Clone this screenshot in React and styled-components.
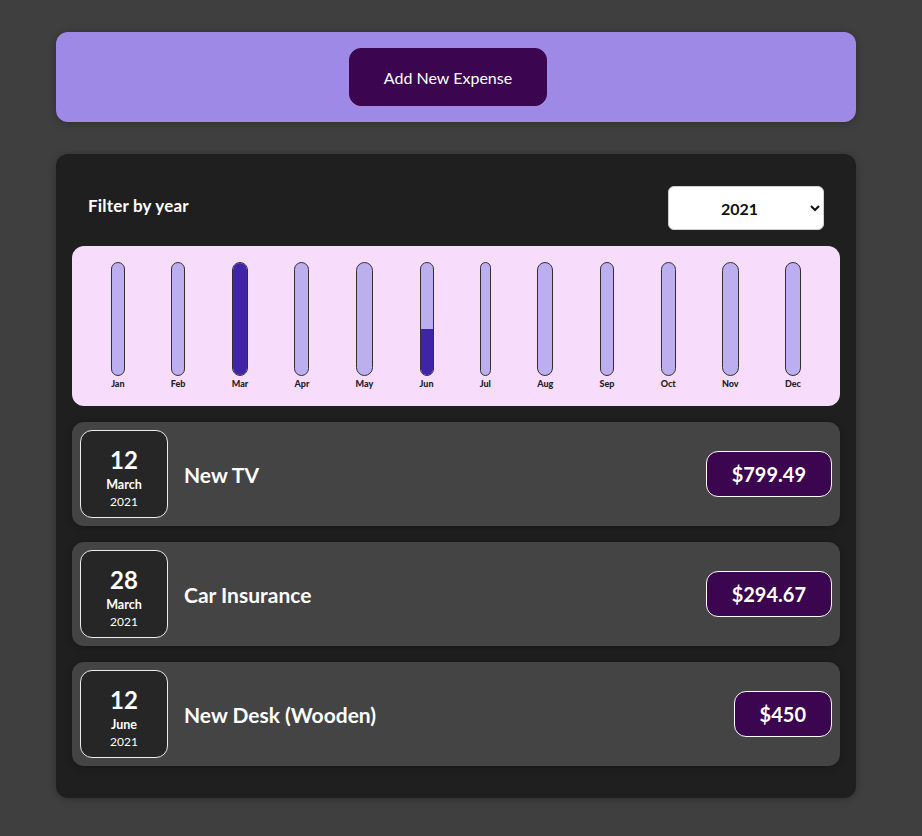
import React from "react";
import styled, { createGlobalStyle } from "styled-components";

const GlobalStyle = createGlobalStyle`
  * { box-sizing: border-box; }
  html { font-family: Lato, "Noto Sans", "Liberation Sans", sans-serif; }
  body { margin: 0; background-color: #3f3f3f; }
`;

const Page = styled.div`
  width: 912px;
  padding: 32px 0;
  display: flex;
  flex-direction: column;
  align-items: center;
  gap: 32px;
`;

const Card = styled.div`
  width: 800px;
  border-radius: 12px;
  box-shadow: 0 1px 8px rgba(0, 0, 0, 0.25);
`;

const NewExpense = styled(Card)`
  background-color: #9e8ae6;
  padding: 16px;
  text-align: center;
`;

const AddButton = styled.button`
  font: inherit;
  font-size: 16px;
  line-height: 24px;
  height: 58px;
  padding: 2px 34px 0;
  margin-right: 16px;
  border: 1px solid #3b054f;
  border-radius: 12px;
  background-color: #3b054f;
  color: white;
  cursor: pointer;
`;

const Expenses = styled(Card)`
  background-color: #1f1f1f;
  padding: 16px;
`;

const Filter = styled.div`
  color: white;
  padding: 0 16px;
`;

const FilterControl = styled.div`
  display: flex;
  align-items: center;
  justify-content: space-between;
  margin: 16px 0;
`;

const FilterLabel = styled.label`
  font-weight: bold;
  font-size: 17px;
  letter-spacing: 0.2px;
  margin-bottom: 6px;
`;

const Select = styled.select`
  font: inherit;
  font-weight: bold;
  font-size: 16px;
  height: 44px;
  width: 156px;
  padding: 0 40px 0 48px;
  border-radius: 6px;
  border: 1px solid #d0d0d0;
  background-color: white;
  color: #111;
`;

const Chart = styled.div`
  height: 160px;
  padding: 16px;
  border-radius: 12px;
  background-color: #f8dcfc;
  display: flex;
  justify-content: space-around;
`;

const BarColumn = styled.div`
  height: 100%;
  display: flex;
  flex-direction: column;
  align-items: center;
`;

const BarInner = styled.div`
  flex: 1;
  width: 100%;
  border: 1px solid #313131;
  border-radius: 12px;
  background-color: #bcaeef;
  overflow: hidden;
  display: flex;
  flex-direction: column;
  justify-content: flex-end;
`;

const BarFill = styled.div`
  width: 100%;
  background-color: #3f24a8;
`;

const BarLabel = styled.div`
  font-weight: 900;
  font-size: 9px;
  line-height: 13px;
  padding-top: 1px;
  color: #222;
  text-align: center;
`;

const List = styled.ul`
  list-style: none;
  padding: 0;
  margin: 16px 0;
  display: flex;
  flex-direction: column;
  gap: 16px;
`;

const Item = styled.li`
  display: flex;
  align-items: center;
  padding: 8px;
  border-radius: 12px;
  background-color: #444444;
  box-shadow: 0 2px 8px rgba(0, 0, 0, 0.25);
`;

const DateBox = styled.div`
  width: 88px;
  height: 88px;
  padding-top: 6px;
  display: flex;
  flex-direction: column;
  align-items: center;
  justify-content: center;
  border: 1px solid #ececec;
  border-radius: 12px;
  background-color: #262626;
  color: white;
`;

const Day = styled.div`
  font-size: 24px;
  font-weight: bold;
  line-height: 32px;
`;

const Month = styled.div`
  font-size: 12.5px;
  font-weight: bold;
  line-height: 17px;
`;

const Year = styled.div`
  font-size: 12px;
  line-height: 17px;
`;

const Description = styled.div`
  flex: 1;
  display: flex;
  align-items: center;
  justify-content: space-between;
`;

const Title = styled.h2`
  margin: 2px 16px 0;
  font-size: 21px;
  font-weight: bold;
  color: white;
  line-height: 28px;
`;

const Price = styled.div`
  font-size: 20px;
  font-weight: bold;
  line-height: 28px;
  color: white;
  background-color: #3b054f;
  border: 1px solid white;
  border-radius: 12px;
  padding: 8px 25px;
`;

const months = ["Jan", "Feb", "Mar", "Apr", "May", "Jun", "Jul", "Aug", "Sep", "Oct", "Nov", "Dec"];

const expenses = [
  { id: 1, title: "New TV", amount: 799.49, day: "12", month: "March", year: "2021", m: 2 },
  { id: 2, title: "Car Insurance", amount: 294.67, day: "28", month: "March", year: "2021", m: 2 },
  { id: 3, title: "New Desk (Wooden)", amount: 450, day: "12", month: "June", year: "2021", m: 5 },
];

export default function App() {
  const totals = months.map((_, i) =>
    expenses.filter((e) => e.m === i).reduce((s, e) => s + e.amount, 0)
  );
  const max = Math.max(...totals);
  return (
    <>
      <GlobalStyle />
      <Page>
        <NewExpense>
          <AddButton>Add New Expense</AddButton>
        </NewExpense>
        <Expenses>
          <Filter>
            <FilterControl>
              <FilterLabel>Filter by year</FilterLabel>
              <Select defaultValue="2021">
                <option value="2022">2022</option>
                <option value="2021">2021</option>
                <option value="2020">2020</option>
                <option value="2019">2019</option>
              </Select>
            </FilterControl>
          </Filter>
          <Chart>
            {months.map((m, i) => (
              <BarColumn key={m}>
                <BarInner>
                  <BarFill style={{ height: `${Math.round((totals[i] / max) * 100)}%` }} />
                </BarInner>
                <BarLabel>{m}</BarLabel>
              </BarColumn>
            ))}
          </Chart>
          <List>
            {expenses.map((e) => (
              <Item key={e.id}>
                <DateBox>
                  <Day>{e.day}</Day>
                  <Month>{e.month}</Month>
                  <Year>{e.year}</Year>
                </DateBox>
                <Description>
                  <Title>{e.title}</Title>
                  <Price>${e.amount}</Price>
                </Description>
              </Item>
            ))}
          </List>
        </Expenses>
      </Page>
    </>
  );
}
